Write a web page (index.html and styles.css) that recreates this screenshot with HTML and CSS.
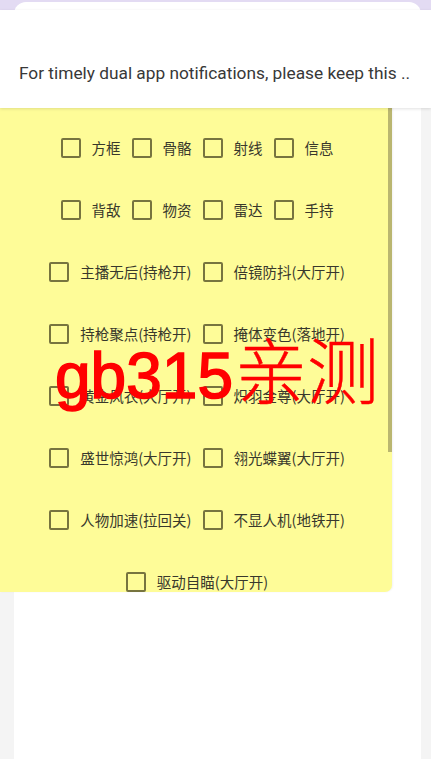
FILE: index.html
```html
<!DOCTYPE html>
<html lang="zh-CN">
<head>
<meta charset="utf-8">
<title>Menu</title>
<link rel="stylesheet" href="styles.css">
</head>
<body>
<div class="card"></div>

<div class="panel">
  <div class="panel-head">Security)</div>
  <div class="rows">
    <div class="row">
      <label class="item"><span class="box"></span><span class="lbl">方框</span></label>
      <label class="item"><span class="box"></span><span class="lbl">骨骼</span></label>
      <label class="item"><span class="box"></span><span class="lbl">射线</span></label>
      <label class="item"><span class="box"></span><span class="lbl">信息</span></label>
    </div>
    <div class="row">
      <label class="item"><span class="box"></span><span class="lbl">背敌</span></label>
      <label class="item"><span class="box"></span><span class="lbl">物资</span></label>
      <label class="item"><span class="box"></span><span class="lbl">雷达</span></label>
      <label class="item"><span class="box"></span><span class="lbl">手持</span></label>
    </div>
    <div class="row">
      <label class="item"><span class="box"></span><span class="lbl">主播无后(持枪开)</span></label>
      <label class="item"><span class="box"></span><span class="lbl">倍镜防抖(大厅开)</span></label>
    </div>
    <div class="row">
      <label class="item"><span class="box"></span><span class="lbl">持枪聚点(持枪开)</span></label>
      <label class="item"><span class="box"></span><span class="lbl">掩体变色(落地开)</span></label>
    </div>
    <div class="row">
      <label class="item"><span class="box"></span><span class="lbl">黄金风衣(大厅开)</span></label>
      <label class="item"><span class="box"></span><span class="lbl">炽羽金尊(大厅开)</span></label>
    </div>
    <div class="row">
      <label class="item"><span class="box"></span><span class="lbl">盛世惊鸿(大厅开)</span></label>
      <label class="item"><span class="box"></span><span class="lbl">翎光蝶翼(大厅开)</span></label>
    </div>
    <div class="row">
      <label class="item"><span class="box"></span><span class="lbl">人物加速(拉回关)</span></label>
      <label class="item"><span class="box"></span><span class="lbl">不显人机(地铁开)</span></label>
    </div>
    <div class="row">
      <label class="item"><span class="box"></span><span class="lbl">驱动自瞄(大厅开)</span></label>
    </div>
  </div>
  <div class="scrollbar"></div>
</div>

<div class="watermark">gb315<span class="cjk">亲测</span></div>

<div class="banner">
  <p class="banner-text">For timely dual app notifications, please keep this ..</p>
</div>
</body>
</html>
```

FILE: styles.css
```css
html, body {
  margin: 0;
  padding: 0;
}

body {
  width: 431px;
  height: 759px;
  overflow: hidden;
  position: relative;
  background: linear-gradient(#e3dbf3 0, #e3dbf3 10px, #f4f4f4 10px);
  font-family: "Noto Sans CJK SC", "Noto Sans", sans-serif;
}

.card {
  margin: 2px 10px 0 14px;
  height: 757px;
  background: #ffffff;
  border-radius: 12px 12px 0 0;
}

.panel {
  position: absolute;
  left: 0;
  top: 86px;
  width: 392px;
  height: 506px;
  background: #fefc98;
  border-radius: 0 0 7px 0;
  overflow: hidden;
  box-shadow: 1px 0 2px rgba(0, 0, 0, 0.05);
}

.panel-head {
  height: 31px;
  padding-left: 8px;
  font-size: 14px;
  line-height: 24px;
  color: #3c3c30;
  box-sizing: border-box;
}

.rows {
  display: flex;
  flex-direction: column;
}

.row {
  height: 62px;
  display: flex;
  justify-content: center;
  align-items: center;
  gap: 11px;
  padding-left: 2px;
}

.item {
  display: flex;
  align-items: center;
  gap: 11px;
}

.box {
  width: 20px;
  height: 20px;
  box-sizing: border-box;
  border: 2.5px solid #77743f;
  border-radius: 2px;
}

.lbl {
  font-size: 14.5px;
  line-height: 20px;
  color: #38382c;
}

.scrollbar {
  position: absolute;
  right: 0;
  top: 22px;
  width: 4px;
  height: 344px;
  background: #bab670;
}

.watermark {
  position: absolute;
  left: 55px;
  top: 344px;
  font-family: "Liberation Sans", Arial, sans-serif;
  font-size: 64px;
  line-height: 64px;
  color: #ff0000;
  -webkit-text-stroke: 1.6px #ff0000;
  white-space: nowrap;
}

.cjk {
  font-family: "Noto Sans CJK SC", sans-serif;
  font-weight: 300;
  font-size: 72px;
  line-height: 0;
  margin-left: 2px;
  -webkit-text-stroke: 0.4px #ff0000;
}

.banner {
  position: absolute;
  left: 0;
  right: 0;
  top: 10px;
  height: 98px;
  background: #ffffff;
  box-shadow: 0 1px 3px rgba(0, 0, 0, 0.12);
  display: flex;
  align-items: center;
}

.banner-text {
  margin: 28px 0 0 19px;
  font-family: Roboto, "Noto Sans", sans-serif;
  font-size: 17.3px;
  color: #383838;
  white-space: nowrap;
}
```
